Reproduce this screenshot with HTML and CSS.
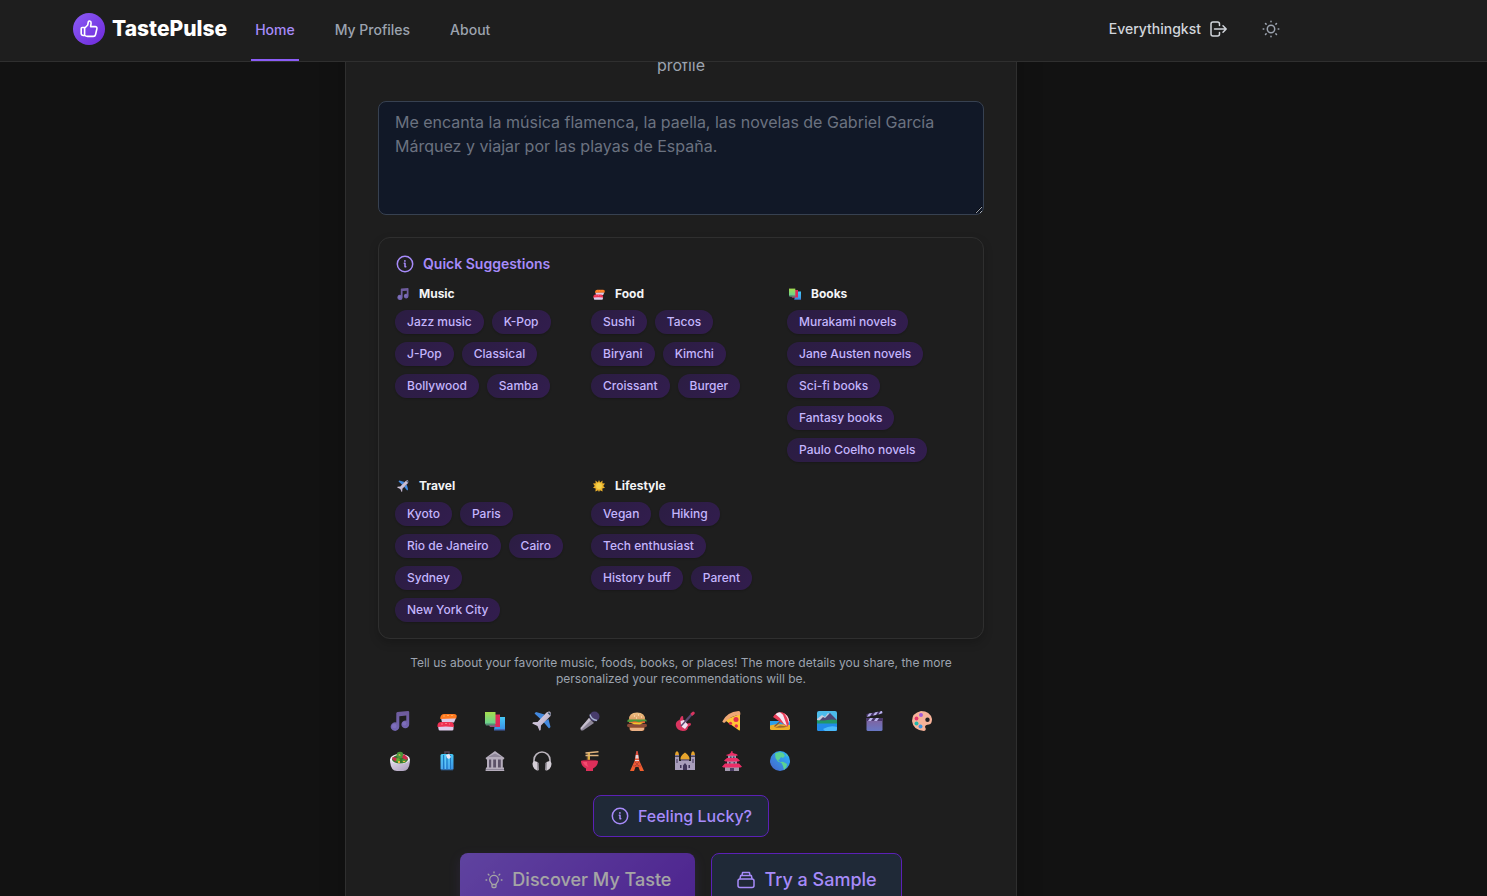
FILE: index.html
```html
<!DOCTYPE html>
<html lang="en">
<head>
    <meta charset="UTF-8">
    <meta name="viewport" content="width=device-width, initial-scale=1.0">
    <title>TastePulse</title>
    <link rel="stylesheet" href="styles.css">
</head>
<body>
    <!-- Icon sprite -->
    <svg class="sprite" aria-hidden="true">
        <defs>
            <linearGradient id="gNote" x1="0" y1="0" x2="0" y2="1"><stop offset="0" stop-color="#6d5a9b"/><stop offset="1" stop-color="#7467b4"/></linearGradient>
            <linearGradient id="gGreen" x1="0" y1="0" x2="0" y2="1"><stop offset="0" stop-color="#a5dc4c"/><stop offset="1" stop-color="#67d192"/></linearGradient>
            <linearGradient id="gBlue" x1="0" y1="0" x2="0" y2="1"><stop offset="0" stop-color="#45c8f5"/><stop offset="1" stop-color="#3b8fe6"/></linearGradient>
            <linearGradient id="gLilac" x1="0" y1="0" x2="1" y2="1"><stop offset="0" stop-color="#e9e1f2"/><stop offset="1" stop-color="#a89bb8"/></linearGradient>
            <linearGradient id="gClap" x1="0" y1="0" x2="0" y2="1"><stop offset="0" stop-color="#83609a"/><stop offset="1" stop-color="#6877c4"/></linearGradient>
            <linearGradient id="gEarth" x1="1" y1="0" x2="0" y2="1"><stop offset="0" stop-color="#27b9ff"/><stop offset="1" stop-color="#4862c8"/></linearGradient>
            <linearGradient id="gTower" x1="0" y1="0" x2="0" y2="1"><stop offset="0" stop-color="#d84b3f"/><stop offset="1" stop-color="#f4602d"/></linearGradient>
            <linearGradient id="gBun" x1="0" y1="0" x2="0" y2="1"><stop offset="0" stop-color="#f0c184"/><stop offset="1" stop-color="#d99a62"/></linearGradient>
        </defs>

        <symbol id="info" viewBox="0 0 20 20"><g fill="none" stroke="currentColor" stroke-width="1.5" stroke-linecap="round" stroke-linejoin="round"><circle cx="10" cy="10" r="7.7"/><path d="M9.300 9.300H10v3.500h.8"/></g><circle cx="9.900" cy="6.900" r=".9" fill="currentColor"/></symbol>
        <symbol id="like" viewBox="0 0 20 20"><path fill="none" stroke="currentColor" stroke-width="1.600" stroke-linejoin="round" stroke-linecap="round" d="M5.600 8.500v8M5.600 8.500H3.200a1 1 0 0 0-1 1v5a2 2 0 0 0 2 2h1.400M5.600 9.200L8.700 6l.6-3c.2-.9.700-1.200 1.400-1 1 .3 1.500 1.100 1.400 2.100l-.5 3.500h4.600c1.300 0 2 .9 1.700 2.100l-1.400 6c-.3 1.200-1 1.700-2.200 1.700H8.600c-1.200 0-2-.3-3-1"/></symbol>
        <symbol id="logout" viewBox="0 0 20 20"><path fill="none" stroke="currentColor" stroke-width="1.500" stroke-linecap="round" stroke-linejoin="round" d="M10.500 6.500V5a2 2 0 0 0-2-2H4a2 2 0 0 0-2 2v10a2 2 0 0 0 2 2h4.500a2 2 0 0 0 2-2v-1.500M5.500 10H17M14 6.800l3.200 3.200-3.200 3.200"/></symbol>
        <symbol id="sun" viewBox="0 0 20 20"><g fill="none" stroke="currentColor" stroke-width="1.500" stroke-linecap="round"><circle cx="10" cy="10" r="3.700"/><path d="M10 2.200v.6M10 17.200v.6M2.200 10h.6M17.200 10h.6M4.500 4.500l.6.6M14.900 14.900l.6.6M4.500 15.500l.6-.6M14.900 5.100l.6-.6"/></g></symbol>
        <symbol id="bulb" viewBox="0 0 20 20"><g fill="none" stroke="currentColor" stroke-width="1.300" stroke-linecap="round" stroke-linejoin="round"><path d="M8 14.500c0-1.500-2.300-2-2.300-4.800a4.300 4.300 0 0 1 8.600 0c0 2.800-2.300 3.300-2.300 4.800zM8 14.500v2a1 1 0 0 0 1 1h2a1 1 0 0 0 1-1v-2M10 2v.8M2 10h.7M17.300 10h.7M4.200 4.200l.8.8M15.800 4.200l-.8.8"/></g></symbol>
        <symbol id="stack" viewBox="0 0 20 20"><g fill="none" stroke="currentColor" stroke-width="1.500" stroke-linejoin="round" stroke-linecap="round"><rect x="2" y="9" width="16" height="8.500" rx="2"/><path d="M4 8.500l.7-3h10.600l.7 3M6 5.200l.6-2.700h6.800l.6 2.700"/></g></symbol>

        <symbol id="music" viewBox="0 0 20 20"><path fill="url(#gNote)" d="M6.300 2.200Q6.300 1 7.500.9L18 0q1.200 0 1.200 1v12.500A3.900 3.900 0 1 1 16.300 9.700V4.500L9.300 5.200V15.700A4.300 4.300 0 1 1 6.300 11.500z"/><circle cx="4.200" cy="15" r="2.300" fill="#8a79c9" opacity=".5"/><circle cx="14.300" cy="12.600" r="2" fill="#8a79c9" opacity=".5"/></symbol>
        <symbol id="sushi" viewBox="0 0 20 20"><path fill="#dccbe8" d="M4 7h15l-2 4.500H5z"/><path fill="#ff7a21" d="M3.300 6.500Q4 3 7 3h10q3 0 2.700 2.600l-.5 2Q11 7.500 3.300 8z"/><path d="M6 5h2M10 4.500h2M14 4.500h2" stroke="#ffae55"/><path fill="#e0cced" d="M1 15h15.500v3q0 1.500-1.500 1.500H3q-1.500 0-1.500-1.500z"/><path fill="#ef3153" d="M.5 14Q1 11 4 11h9.500q3 0 3.300 3v2Q9 15 .5 16z"/><path d="M4 13h2M8 12.500h2M12 13h1" stroke="#ff7788"/></symbol>
        <symbol id="books" viewBox="0 0 20 20"><path fill="url(#gBlue)" d="M11 6h9v13H9z"/><path fill="#4165b4" d="M9 18h11v1.500H9z"/><path fill="#dc2859" d="M9 3.500h6V16H5z"/><path fill="#974d80" d="M4 14h7v2H5z"/><path fill="url(#gGreen)" d="M0 1h10.500v12H0z"/><path fill="#568c74" d="M0 12.500h10v2H1z"/></symbol>
        <symbol id="plane" viewBox="0 0 20 20"><path fill="#4389df" d="M2.500 2.500L4 1l8.500 2.500L9 8.500zM16.500 8l2 8-1.500 1.500L11.500 11z"/><path fill="url(#gLilac)" d="M14.500 1.500Q20-1.500 18.500 5L9 14.500l-.3 4.500-1.200.8L5.500 15 .3 12.500 1 11.300l4.500-.3z"/><path fill="#36536c" d="M15.500 2l2.500 2.500.7-1.500L17 1.300z"/></symbol>
        <symbol id="mic" viewBox="0 0 20 20"><path fill="#8e8799" d="M9 7l5 5L3 19.500Q0 20 .5 17z"/><path fill="#c6bfce" d="M9 7l2 2L1.500 18.500.5 17z"/><circle cx="14.500" cy="5.500" r="5" fill="#473c6c"/><path fill="none" stroke="#a9b4d0" stroke-width="1.300" d="M10 3.500q1 5 7 6"/></symbol>
        <symbol id="burger" viewBox="0 0 20 20"><path fill="url(#gBun)" d="M2 9Q1.500 1.500 10 1.500T18 9z"/><path fill="#b46f41" d="M2.500 15.500h15v2q0 2.500-2.500 2.500H5q-2.500 0-2.500-2.500z"/><path fill="#eab084" d="M3 17h14v1.500L15 20H5l-2-1.500z"/><rect y="12.700" width="20" height="3.600" rx="1.800" fill="#8b4c38"/><path fill="#e65335" d="M2 10h16v2H2z"/><path fill="#f3c52d" d="M3 11.500h14l-4 2-6-.2z"/><path fill="#4b9b3b" d="M1 8.500h18l1 2-4-.3-4 1-4-1-5 1-3-.7z"/><path stroke="#fff0ca" d="M7 5h1M11 4h1M14 6h1M9 7h1"/></symbol>
        <symbol id="guitar" viewBox="0 0 20 20"><path stroke="#554a70" stroke-width="2.200" d="M9 12l8-9"/><path fill="#d9345f" d="M15.500 2.500L18 .5q3 .8 1 3L17 5zM4.500 9L6 5.500 8 5l.5 4 3.500 3.500 3.500-.5.5 2-3 2q0 4-5 4-6-.5-7-5T4.500 9z"/><path fill="#eee1f1" d="M5.500 10L9 9l4 5-3 4-3-2-1-3z"/><path stroke="#5d486f" stroke-width="1.500" d="M6 15l8-8.500"/></symbol>
        <symbol id="pizza" viewBox="0 0 20 20"><path fill="#ffc435" d="M2.500 9L18 3v15.500q0 1.500-1.200.8z"/><path fill="#efa775" d="M.3 10.500Q5 1 16.500.1q1.800-.1 1.800 2v1.700Q8 5 3 11.500q-1.500 1-2.700-1z"/><circle cx="14" cy="8.500" r="2.500" fill="#e22d4e"/><circle cx="8.500" cy="12.300" r="1.600" fill="#e22d4e"/><circle cx="14.300" cy="15" r="1.700" fill="#e22d4e"/></symbol>
        <symbol id="beach" viewBox="0 0 20 20"><path fill="#2c9ee9" d="M0 10h20v6H0z"/><path fill="#eeb02a" d="M0 14.500q7-2 20-.5v3.500q0 1.500-1.500 1.500h-17Q0 19 0 17.500z"/><path fill="#a36a28" d="M5 16.500l5-2 8 1q-6 2-13 1z"/><path stroke="#8a5331" stroke-width="1.200" d="M4.500 15.500L12 9"/><path fill="#eb3d58" d="M3 6Q6 .5 12 1.300q6 2 7 8 .2 4-1.500 6.500z"/><path fill="#f4e6f2" d="M5.500 3.300Q7.500 1.500 10 1.300l3 2.500 4 11-3-2Q11 7 5.500 3.300zM14 2.200q4.200 2.500 5 7l-.5 3Q18 6.500 14 2.200z"/></symbol>
        <symbol id="mountain" viewBox="0 0 20 20"><rect width="20" height="20" rx="2" fill="#4cbceb"/><path fill="#c9cedd" d="M0 8l5-4 3 2 3-4 9 7v3H0z"/><path fill="#4f4774" d="M3 9l3-3 2 1 5-5 7 7v3H0z"/><path fill="#219668" d="M0 9q5 1 10 0t10 0v4H0z"/><path fill="#218be8" d="M0 12.500h20V18q0 2-2 2H2q-2 0-2-2z"/><path fill="#4bbafa" d="M6 18q7-4 14-2v2q0 2-2 2H8z"/></symbol>
        <symbol id="clapper" viewBox="0 0 20 20"><path fill="url(#gClap)" d="M1.500 7h16v11.500q0 1.500-1.500 1.500H3q-1.500 0-1.500-1.500z"/><path fill="#49366c" d="M1.500 3L17 0l.5 2.500-16 3.500zM1.500 7h16v3h-16z"/><path fill="#bbb4eb" d="M4 2.600l3-.6-2 3.200-3 .6zM10 1.400l3-.6L11 4l-3 .6zM15.500.3L17 0l.4 2L15 3l-1.500.4zM5 7h3l-2 3H3zM11 7h3l-2 3H9z"/></symbol>
        <symbol id="palette" viewBox="0 0 20 20"><path fill="#f7b299" d="M9 0q9 0 11 8 0 5-3 5.500-4 0-4 2.500 2 3-1 4Q1 19 0 10 0 2 9 0z"/><circle cx="15.500" cy="8.800" r="2.200" fill="#262125"/><circle cx="9" cy="4" r="2" fill="#a45cda"/><circle cx="4.500" cy="7.500" r="1.900" fill="#e8366b"/><circle cx="4.500" cy="12.500" r="2" fill="#23b6aa"/><circle cx="8.500" cy="15.500" r="2" fill="#3c93df"/></symbol>
        <symbol id="salad" viewBox="0 0 20 20"><path fill="url(#gLilac)" d="M0 8h20q0 12-7 12H7Q0 20 0 8z"/><ellipse cx="10" cy="8" rx="9.800" ry="5" fill="#f0ebf2"/><ellipse cx="10" cy="8.300" rx="8" ry="4.300" fill="#39752d"/><circle cx="10" cy="4" r="3.300" fill="#4a963b"/><path fill="#ce294c" d="M2.500 6l4.500 1-1 3.500-3.500-2zM14 3l4 4-2 2.500-4-3z"/><circle cx="8" cy="9" r="2" fill="#65a832"/><circle cx="14" cy="10" r="2" fill="#4d9738"/><path fill="#f4b943" d="M8 4l2-1 .5 2zM8 10h2v2H8zM13 10h2v1h-2z"/></symbol>
        <symbol id="luggage" viewBox="0 0 20 20"><path fill="none" stroke="#56455a" stroke-width="1.500" d="M8 4V1h4v3"/><rect x="3.500" y="3" width="13" height="16" rx="1.500" fill="url(#gBlue)"/><path stroke="#1f78c2" d="M6.500 4v14M10 4v14M13.500 4v14"/><path stroke="#6fd0f8" stroke-width=".7" d="M5 4v14M8.500 4v14M12 4v14"/><path fill="#eee5f3" d="M9 4l3-1 2 3-2 2-2-1z"/><path fill="#28486a" d="M4 18.500h12v1H4z"/></symbol>
        <symbol id="museum" viewBox="0 0 20 20"><path fill="#5c5268" d="M3 8h14v9H3z"/><path fill="#b5adbc" d="M.5 7L10 0l9.500 7-1 1.500h-17zM2 8.500h2V17H2zM6.200 8.500h2V17h-2zM11 8.500h2V17h-2zM15.800 8.500h2V17h-2zM1 16.500h18V19l.5 1H.5z"/><path fill="#8f8799" d="M3 6l7-3.500L17 6zM1 18h18v1H1z"/></symbol>
        <symbol id="headphones" viewBox="0 0 20 20"><path fill="none" stroke="#bbb5bd" stroke-width="1.600" d="M2 12V9a8 8 0 0 1 16 0v3"/><path fill="#d4ced6" d="M.5 13q0-2.500 2-3l3 1 1.500 8-2 .5q-3-1-4-4zM19.500 13q0-2.500-2-3l-3 1-1.500 8 2 .5q3-1 4-4z"/><path fill="#8b858e" d="M5.300 11l1.500 1v7l-1.500.5zM14.700 11l-1.500 1v7l1.500.5z"/></symbol>
        <symbol id="noodles" viewBox="0 0 20 20"><path stroke="#eebf42" stroke-width="1.800" d="M9 2v8"/><path stroke="#967042" d="M7.300 2v8"/><path stroke="#e1b47e" stroke-width="1.500" d="M5.500 2L18.500.8M5.500 4.500l13 0"/><ellipse cx="9.500" cy="10" rx="8.500" ry="1.300" fill="#9e203f"/><path fill="#dd2f5a" d="M1 10h17q0 5-5 7.500V20H6v-2.500Q1 15 1 10z"/><path fill="#f34b70" d="M3 11h4q0 4 2 5-5-1-6-5z"/></symbol>
        <symbol id="tower" viewBox="0 0 20 20"><path fill="url(#gTower)" d="M9.300 0h1.400l1.800 10 4.500 10h-4l-1.500-4h-3L7 20H3l4.500-10z"/><path fill="#e6d8e0" d="M8.800 4h2.400l.4 3.500H8.400zM8 9h4v1H8z"/><path stroke="#a83a33" stroke-width=".7" d="M8 11l4 4M12 11l-4 4M6 15h8"/></symbol>
        <symbol id="mosque" viewBox="0 0 20 20"><path fill="#a99ebc" d="M0 6h4v13H0zM16 6h4v13h-4zM4 10h12v9H4z"/><path fill="#e7a42c" d="M0 4q0-3 2-4 2 1 2 4zM16 4q0-3 2-4 2 1 2 4zM5.500 8.500Q5 5 10 1.500q5 3.500 4.500 7z"/><path fill="#7d7194" d="M0 4h4v1.500H0zM16 4h4v1.500h-4zM6 8.500h8V10H6z"/><path fill="#41355a" d="M1.500 8h1v4h-1zM17.500 8h1v4h-1zM8 19v-4.500l2-2.500 2 2.500V19zM5 14h1.500v3H5zM13.500 14H15v3h-1.500z"/></symbol>
        <symbol id="pagoda" viewBox="0 0 20 20"><path fill="#a298ae" d="M6 4h8v4H6zM5 8h10v5H5zM3 13h14v7H3z"/><path fill="#ec2e67" d="M9.500 0h1v1.500q1 1 4 1.500l1 .7v1h-11v-1Q9 3 9.500 0zM5 7h10l3 2.500q-1 1-2 1H4q-1 0-2-1zM3 12.500h14l3 3.200-1.500.8H1.500L0 15.700z"/><path fill="#4c3f65" d="M8 5.500h1.500V7H8zM11 5.500h1.500V7H11zM7 11h1.500v1.500H7zM11.500 11H13v1.500h-1.500zM8 17h4v3H8z"/></symbol>
        <symbol id="globe" viewBox="0 0 20 20"><circle cx="10" cy="10" r="10" fill="url(#gEarth)"/><path fill="#5ad294" d="M5 2.500L9 1l4 .7 2 3-2 2.300-2-1-1.500 2.500L8 9l2 2 3-.3 4 2.300-.5 3L14 19l-1-4-1.500-3L8 10.500 5.500 7zM16 2.500l2 2.500-1.500.5z"/></symbol>
        <symbol id="star" viewBox="0 0 20 20"><path fill="#edb32c" d="M10 0l1.800 4L16 1l-.5 4.500L20 6l-3 4 3 3-4.500 1L16 19l-4.500-2L10 20l-1.500-3L4 19l.5-5L0 13l3-3-3-4 4.500-.5L4 1l4.200 3z"/><circle cx="10" cy="10" r="4.800" fill="#f3d04a"/></symbol>
    </svg>

    <!-- Header -->
    <header class="header">
        <div class="header-inner">
            <div class="brand">
                <span class="brand-logo"><svg class="icon"><use href="#like"/></svg></span>
                <span class="brand-name">TastePulse</span>
            </div>
            <nav class="nav">
                <a class="nav-link active" href="#">Home</a>
                <a class="nav-link" href="#">My Profiles</a>
                <a class="nav-link" href="#">About</a>
            </nav>
            <div class="account">
                <button class="user-btn" type="button">Everythingkst<svg class="icon"><use href="#logout"/></svg></button>
                <button class="theme-btn" type="button" aria-label="Toggle theme"><svg class="icon"><use href="#sun"/></svg></button>
            </div>
        </div>
    </header>

    <!-- Main card -->
    <main class="main">
        <section class="card">
            <label class="card-label" for="taste">profile</label>
            <textarea class="taste-input" id="taste" rows="4" placeholder="Me encanta la música flamenca, la paella, las novelas de Gabriel García Márquez y viajar por las playas de España."></textarea>

            <div class="suggestions">
                <h2 class="suggestions-title"><svg class="icon"><use href="#info"/></svg>Quick Suggestions</h2>
                <div class="categories">
                    <div class="category">
                        <h3 class="category-title"><svg class="emoji-sm"><use href="#music"/></svg>Music</h3>
                        <div class="chips">
                            <button class="chip" type="button">Jazz music</button>
                            <button class="chip" type="button">K-Pop</button>
                            <button class="chip" type="button">J-Pop</button>
                            <button class="chip" type="button">Classical</button>
                            <button class="chip" type="button">Bollywood</button>
                            <button class="chip" type="button">Samba</button>
                        </div>
                    </div>
                    <div class="category">
                        <h3 class="category-title"><svg class="emoji-sm"><use href="#sushi"/></svg>Food</h3>
                        <div class="chips">
                            <button class="chip" type="button">Sushi</button>
                            <button class="chip" type="button">Tacos</button>
                            <button class="chip" type="button">Biryani</button>
                            <button class="chip" type="button">Kimchi</button>
                            <button class="chip" type="button">Croissant</button>
                            <button class="chip" type="button">Burger</button>
                        </div>
                    </div>
                    <div class="category">
                        <h3 class="category-title"><svg class="emoji-sm"><use href="#books"/></svg>Books</h3>
                        <div class="chips">
                            <button class="chip" type="button">Murakami novels</button>
                            <button class="chip" type="button">Jane Austen novels</button>
                            <button class="chip" type="button">Sci-fi books</button>
                            <button class="chip" type="button">Fantasy books</button>
                            <button class="chip" type="button">Paulo Coelho novels</button>
                        </div>
                    </div>
                    <div class="category">
                        <h3 class="category-title"><svg class="emoji-sm"><use href="#plane"/></svg>Travel</h3>
                        <div class="chips">
                            <button class="chip" type="button">Kyoto</button>
                            <button class="chip" type="button">Paris</button>
                            <button class="chip" type="button">Rio de Janeiro</button>
                            <button class="chip" type="button">Cairo</button>
                            <button class="chip" type="button">Sydney</button>
                            <button class="chip" type="button">New York City</button>
                        </div>
                    </div>
                    <div class="category">
                        <h3 class="category-title"><svg class="emoji-sm"><use href="#star"/></svg>Lifestyle</h3>
                        <div class="chips">
                            <button class="chip" type="button">Vegan</button>
                            <button class="chip" type="button">Hiking</button>
                            <button class="chip" type="button">Tech enthusiast</button>
                            <button class="chip" type="button">History buff</button>
                            <button class="chip" type="button">Parent</button>
                        </div>
                    </div>
                </div>
            </div>

            <p class="hint">Tell us about your favorite music, foods, books, or places! The more details you share, the more personalized your recommendations will be.</p>

            <div class="emoji-grid">
                <svg class="emoji"><use href="#music"/></svg>
                <svg class="emoji"><use href="#sushi"/></svg>
                <svg class="emoji"><use href="#books"/></svg>
                <svg class="emoji"><use href="#plane"/></svg>
                <svg class="emoji"><use href="#mic"/></svg>
                <svg class="emoji"><use href="#burger"/></svg>
                <svg class="emoji"><use href="#guitar"/></svg>
                <svg class="emoji"><use href="#pizza"/></svg>
                <svg class="emoji"><use href="#beach"/></svg>
                <svg class="emoji"><use href="#mountain"/></svg>
                <svg class="emoji"><use href="#clapper"/></svg>
                <svg class="emoji"><use href="#palette"/></svg>
                <svg class="emoji"><use href="#salad"/></svg>
                <svg class="emoji"><use href="#luggage"/></svg>
                <svg class="emoji"><use href="#museum"/></svg>
                <svg class="emoji"><use href="#headphones"/></svg>
                <svg class="emoji"><use href="#noodles"/></svg>
                <svg class="emoji"><use href="#tower"/></svg>
                <svg class="emoji"><use href="#mosque"/></svg>
                <svg class="emoji"><use href="#pagoda"/></svg>
                <svg class="emoji"><use href="#globe"/></svg>
            </div>

            <div class="actions">
                <button class="btn btn-outline" type="button"><svg class="icon"><use href="#info"/></svg>Feeling Lucky?</button>
            </div>
            <div class="actions">
                <button class="btn btn-lg btn-primary" type="submit" disabled><svg class="icon"><use href="#bulb"/></svg>Discover My Taste</button>
                <button class="btn btn-lg btn-outline" type="button"><svg class="icon"><use href="#stack"/></svg>Try a Sample</button>
            </div>
        </section>
    </main>
</body>
</html>
```
FILE: styles.css
```css
* {
    margin: 0;
    padding: 0;
    box-sizing: border-box;
}

:root {
    --rail: 125px;
    --surface: #1e1e1e;
    --line: #2f2f2f;
    --accent: #a78bfa;
}

body {
    height: 100vh;
    overflow: hidden;
    background: #121212;
    color: #e5e7eb;
    font-family: Inter, "Liberation Sans", sans-serif;
    font-size: 16px;
    line-height: 24px;
}

button,
textarea {
    font: inherit;
    color: inherit;
}

button {
    background: none;
    border: none;
    cursor: pointer;
}

.sprite {
    position: absolute;
    width: 0;
    height: 0;
}

.icon {
    width: 20px;
    height: 20px;
    flex-shrink: 0;
}

/* Header */
.header {
    position: fixed;
    top: 0;
    left: 0;
    right: 0;
    z-index: 10;
    padding-right: var(--rail);
    background: var(--surface);
    border-bottom: 1px solid var(--line);
}

.header-inner {
    display: flex;
    align-items: stretch;
    gap: 24px;
    max-width: 1280px;
    height: 61px;
    margin: 0 auto;
    padding: 0 32px;
}

.brand,
.account {
    display: flex;
    align-items: center;
    padding-bottom: 3px;
}

.brand {
    gap: 7px;
}

.brand-logo {
    display: flex;
    align-items: center;
    justify-content: center;
    width: 32px;
    height: 32px;
    border-radius: 50%;
    background: linear-gradient(135deg, #8b5cf6, #6d28d9);
    color: #fff;
}

.brand-name {
    color: #fff;
    font-size: 21px;
    font-weight: 800;
}

.nav {
    display: flex;
    gap: 32px;
}

.nav-link {
    display: flex;
    align-items: center;
    padding: 0 4px;
    border-bottom: 2px solid transparent;
    color: #9ca3af;
    font-size: 14px;
    font-weight: 500;
    text-decoration: none;
}

.nav-link.active {
    color: var(--accent);
    border-color: #8b5cf6;
}

.account {
    gap: 24px;
    margin-left: auto;
}

.user-btn {
    display: flex;
    align-items: center;
    gap: 8px;
    color: #d1d5db;
    font-size: 14px;
    font-weight: 500;
}

.theme-btn {
    display: flex;
    padding: 8px;
    color: #9ca3af;
}

/* Card */
.main {
    padding-right: var(--rail);
}

.card {
    max-width: 672px;
    margin: 0 auto;
    padding: 53px 32px 32px;
    background: var(--surface);
    border: 1px solid var(--line);
    border-top: none;
    box-shadow: 0 10px 25px rgba(0, 0, 0, 0.2);
}

.card-label {
    display: block;
    margin-bottom: 24px;
    color: #9ca3af;
    text-align: center;
}

.taste-input {
    display: block;
    width: 100%;
    margin-bottom: 22px;
    padding: 8px 16px;
    background: #111827;
    border: 1px solid #374151;
    border-radius: 8px;
    resize: vertical;
}

.taste-input::placeholder {
    color: #6b7280;
}

.suggestions {
    margin-bottom: 16px;
    padding: 16px;
    border: 1px solid var(--line);
    border-radius: 12px;
    box-shadow: 0 4px 10px rgba(0, 0, 0, 0.2);
}

.suggestions-title {
    display: flex;
    align-items: center;
    gap: 8px;
    margin-bottom: 12px;
    color: var(--accent);
    font-size: 14px;
    font-weight: 600;
    line-height: 20px;
}

.categories {
    display: grid;
    grid-template-columns: repeat(3, 1fr);
    gap: 16px;
}

.category-title {
    display: flex;
    align-items: center;
    margin-bottom: 8px;
    color: #f3f4f6;
    font-size: 12px;
    font-weight: 700;
    line-height: 16px;
}

.emoji-sm {
    width: 12px;
    height: 12px;
    margin: 0 10px 0 2px;
}

.chips {
    display: flex;
    flex-wrap: wrap;
    gap: 8px;
}

.chip {
    padding: 4px 12px;
    border-radius: 12px;
    background: linear-gradient(135deg, #2b1d42, #321d4e);
    box-shadow: 0 1px 2px rgba(0, 0, 0, 0.2);
    color: #c4b5fd;
    font-size: 12px;
    font-weight: 500;
    line-height: 16px;
}

.hint {
    margin-bottom: 16px;
    color: #9ca3af;
    font-size: 12px;
    line-height: 16px;
    text-align: center;
}

.emoji-grid {
    display: grid;
    grid-template-columns: repeat(12, 1fr);
    grid-auto-rows: 36px;
    gap: 4px;
    place-items: center;
    margin: 0 40px 16px 0;
}

.emoji {
    width: 20px;
    height: 20px;
}

/* Buttons */
.actions {
    display: flex;
    justify-content: center;
    gap: 16px;
    margin-bottom: 16px;
}

.btn {
    display: flex;
    align-items: center;
    gap: 8px;
    padding: 8px 16px;
    border: 1px solid transparent;
    border-radius: 8px;
    font-weight: 500;
}

.btn-outline {
    background: #1f2937;
    border-color: #5b21b6;
    color: var(--accent);
}

.btn-lg {
    padding: 12px 24px;
    font-size: 18px;
    line-height: 28px;
}

.btn-primary {
    border: none;
    background: linear-gradient(135deg, #8b5cf6, #6d28d9);
    box-shadow: 0 4px 12px rgba(139, 92, 246, 0.2);
    color: #fff;
    opacity: 0.6;
}
```
